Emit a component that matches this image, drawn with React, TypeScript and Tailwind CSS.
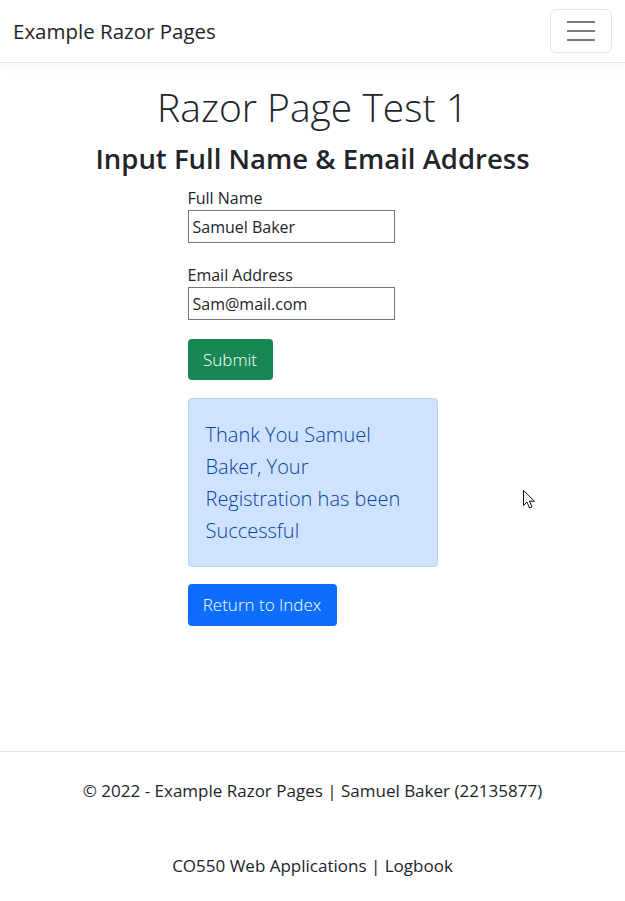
import { useState } from "react";

export default function App() {
  const [fullName, setFullName] = useState("Samuel Baker");
  const [email, setEmail] = useState("Sam@mail.com");

  return (
    <div className="relative min-h-[901px] bg-white text-[#212529] font-['Open_Sans',sans-serif] font-light">
      {/* Navbar */}
      <nav className="flex h-[63px] items-center justify-between border-b border-[#e4e4e8] pl-[13px] pr-[13px] shadow-[0_4px_10px_rgba(0,0,0,0.04)]">
        <span className="text-[20.5px] font-normal text-[#212529]">Example Razor Pages</span>
        <button className="flex h-[44px] w-[62px] flex-col items-center justify-center gap-[7px] rounded-[6px] border border-[#e6e6e6]">
          <span className="h-[2px] w-[28px] bg-[#7a7a7a]" />
          <span className="h-[2px] w-[28px] bg-[#7a7a7a]" />
          <span className="h-[2px] w-[28px] bg-[#7a7a7a]" />
        </button>
      </nav>

      {/* Main */}
      <main className="flex flex-col items-center pt-[20px]">
        <h1 className="text-[39px] font-light leading-[48px]">Razor Page Test 1</h1>
        <h3 className="mt-[13px] text-[27.5px] font-semibold leading-[30px]">Input Full Name &amp; Email Address</h3>

        <div className="mt-[12px] flex w-[250px] flex-col items-start">
          <label className="text-[16px] font-normal leading-[24px]">Full Name</label>
          <input
            value={fullName}
            onChange={(e) => setFullName(e.target.value)}
            className="h-[33px] w-[207px] border border-[#767676] px-[4px] text-[16px] font-normal outline-none"
          />

          <label className="mt-[20px] text-[16px] font-normal leading-[24px]">Email Address</label>
          <input
            value={email}
            onChange={(e) => setEmail(e.target.value)}
            className="h-[33px] w-[207px] border border-[#767676] px-[4px] text-[16px] font-normal outline-none"
          />

          <button className="mt-[19px] h-[41px] w-[85px] rounded-[4px] bg-[#198754] text-[17px] text-white">
            Submit
          </button>

          <div className="mt-[18px] h-[169px] w-[250px] rounded-[4px] border border-[#b6d4fe] bg-[#cfe2ff] px-[17px] py-[20px] text-[20px] leading-[32px] text-[#084298]">
            Thank You Samuel Baker, Your Registration has been Successful
          </div>

          <button className="mt-[17px] h-[42px] w-[149px] rounded-[4px] bg-[#0d6efd] text-[17px] text-white">
            Return to Index
          </button>
        </div>
      </main>

      {/* Footer */}
      <footer className="absolute left-0 right-0 top-[751px] border-t border-[#e2e2e2] text-center text-[17px] font-normal">
        <p className="mt-[26px] leading-[26px]">© 2022 - Example Razor Pages | Samuel Baker (22135877)</p>
        <p className="mt-[49px] leading-[26px]">CO550 Web Applications | Logbook</p>
      </footer>

      {/* Mouse cursor */}
      <svg className="absolute left-[523px] top-[490px]" width="13" height="20" viewBox="0 0 13 20">
        <path d="M0.5 0.5 L0.5 15.5 L4 12 L6.5 18 L9 17 L6.5 11.2 L11.5 11.2 Z" fill="#fff" stroke="#111" strokeWidth="1" />
      </svg>
    </div>
  );
}
